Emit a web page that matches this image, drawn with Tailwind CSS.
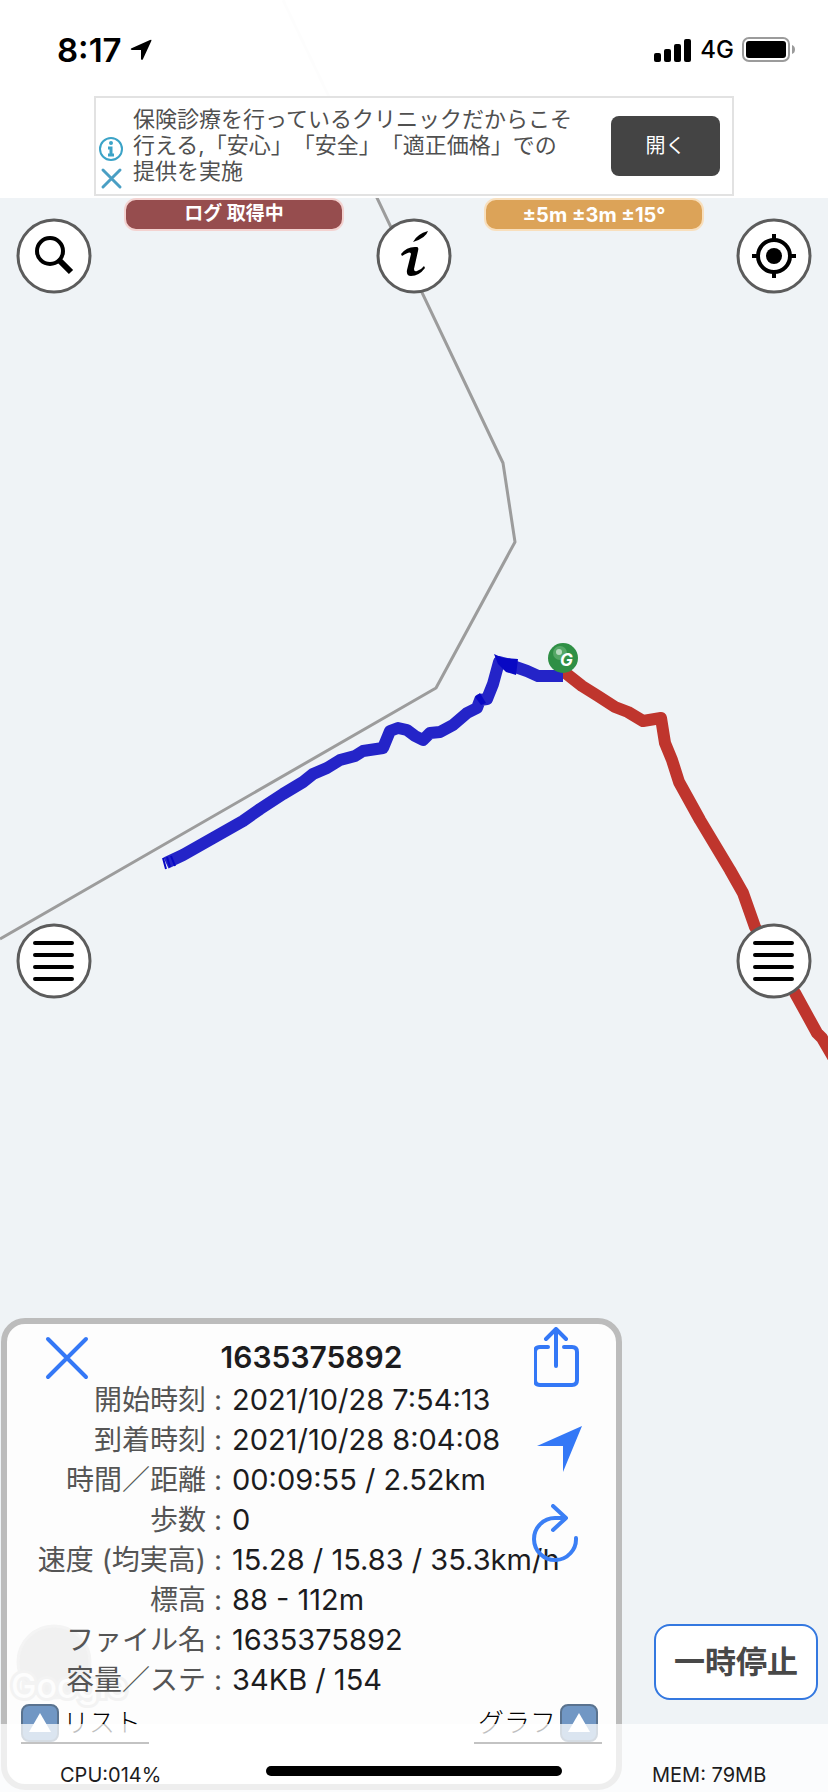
<!DOCTYPE html>
<html lang="ja">
<head>
    <meta charset="UTF-8">
    <meta name="viewport" content="width=device-width, initial-scale=1.0">
    <title>GPS Log Map</title>
    <script src="https://cdn.jsdelivr.net/npm/@tailwindcss/browser@4"></script>
</head>
<body class="bg-[#eff3f6] font-['Inter','Noto_Sans_CJK_JP',sans-serif] text-[#1c1c1e]">
    <div class="relative flex min-h-screen flex-col overflow-hidden">

        <!-- Map canvas -->
        <svg class="absolute inset-0 h-full w-full" viewBox="0 0 828 1792" preserveAspectRatio="xMidYMid slice" fill="none" stroke-linejoin="round">
            <polyline points="283,0 503,463 515,542 436,688 0,939" stroke="#9c9c9c" stroke-width="3"/>
            <polyline points="563,671 582,686 598,696 615,707 628,712 643,721 661,718 665,743 672,760 679,782 700,820 712,840 730,870 743,893 755,927 795,993 817,1033 822,1038 836,1062" stroke="#bf352d" stroke-width="12"/>
            <polyline points="166,863 183,855 213,838 243,821 260,809 283,794 303,782 313,774 327,768 340,760 355,756 363,751 383,748 390,731 398,728 407,730 415,736 423,740 430,733 440,732 453,725 467,713 477,708 480,700 487,699 493,684 499,662 507,664 527,671 538,676 563,676" stroke="#2424c8" stroke-width="12"/>
            <path d="M494 654l9 4 15 1-2 16-10-3-8-8zM475 697l5-4 6 10-5 2z" fill="#0808c4"/>
            <path d="M163 858l3 11M167 857l3 10M171 856l4 10" stroke="#0808c4" stroke-width="2"/>
            <circle cx="563" cy="658" r="15" fill="#2f8f45"/>
            <circle cx="560" cy="653" r="7" fill="#55a766"/>
            <circle cx="559" cy="652" r="3" fill="#b5dabd"/>
            <text x="560" y="666" font-size="17" font-weight="700" font-style="italic" fill="#fff">G</text>
        </svg>

        <header class="relative bg-white/98 pb-0.5">
            <div class="flex h-24 items-center justify-between pt-1 pr-8 pl-[57px]">
                <div class="flex items-center gap-2 text-black">
                    <span class="text-[33px] leading-8 font-semibold">8:17</span>
                    <svg class="h-[22px] w-[22px]" viewBox="0 0 22 22"><path d="M1 9.500L20 1Q22 0 21.300 2L13 20Q12 22 11 20V11H2Q0 10.500 1 9.500z"/></svg>
                </div>
                <div class="flex items-center gap-2 text-black">
                    <svg class="h-6 w-[38px]" viewBox="0 0 38 24"><rect x="0" y="15" width="7" height="9" rx="2"/><rect x="10" y="11" width="7" height="13" rx="2"/><rect x="20" y="6" width="7" height="18" rx="2"/><rect x="30" y="1" width="7" height="23" rx="2"/></svg>
                    <span class="text-2xl leading-6 font-medium">4G</span>
                    <svg class="h-[26px] w-[54px]" viewBox="0 0 54 26"><rect x="1" y="1" width="46" height="23" rx="6" fill="none" stroke="#9b9b9b" stroke-width="2"/><rect x="4" y="4" width="40" height="17" rx="3"/><path d="M50 8q3 1 3 4.500t-3 4.500z" fill="#9b9b9b"/></svg>
                </div>
            </div>

            <!-- Banner ad -->
            <div class="mx-auto flex h-[100px] w-[640px] max-w-full items-center border-2 border-[#e2e2e2] bg-white pr-3">
                <div class="mr-[7px] flex w-[30px] flex-col items-center gap-1 self-end pb-1">
                    <a href="#" aria-label="広告について"><svg class="h-[26px] w-[26px]" viewBox="0 0 26 26" fill="none" stroke="#3ba3c7"><circle cx="13" cy="13" r="11" stroke-width="2"/><path d="M10 12h3v7M10 19h6" stroke-width="3"/><circle cx="13" cy="7" r="1" stroke-width="2"/></svg></a>
                    <button type="button" aria-label="広告を閉じる"><svg class="h-6 w-6" viewBox="0 0 24 24" stroke="#4a9fc4" stroke-width="3" stroke-linecap="round"><path d="M4 4l17 17M21 4L4 21"/></svg></button>
                </div>
                <p class="flex-1 pb-0.5 text-[22px] leading-[26px] whitespace-nowrap text-[#505050] [text-spacing-trim:space-all]">保険診療を行っているクリニックだからこそ<br>行える,「安心」「安全」「適正価格」での<br>提供を実施</p>
                <button type="button" class="h-[60px] w-[109px] rounded-lg bg-[#444] text-xl text-white">開く</button>
            </div>
        </header>

        <main class="relative flex flex-1 flex-col">
            <div class="flex items-start justify-between px-4">
                <button type="button" aria-label="検索" class="mt-5 rounded-full">
                    <svg class="h-[76px] w-[76px]" viewBox="-38 -38 76 76"><circle r="36" fill="#fff" stroke="#5c5c5c" stroke-width="3"/><circle cx="-4" cy="-5" r="13" fill="none" stroke="#000" stroke-width="4"/><path d="M5 4L17 16" stroke="#000" stroke-width="6"/></svg>
                </button>
                <div class="flex h-[33px] w-[220px] items-center justify-center rounded-xl border-2 border-[#f3d2d0] bg-[#964d4e] text-[19px] font-bold text-white">ログ 取得中</div>
                <button type="button" aria-label="情報" class="mt-5 rounded-full">
                    <svg class="h-[76px] w-[76px]" viewBox="-38 -38 76 76"><circle r="36" fill="#fff" stroke="#5c5c5c" stroke-width="3"/><path d="M-1 -14Q3 -22 14 -25Q12 -18 -1 -14zM-13 -2Q-7 -10 3 -9Q5 -9 4 -5L0 13Q0 16 3 15Q7 14 10 10L11 12Q5 20 -3 20Q-8 20 -7 14L-3 -2Q-3 -6 -12 0z"/></svg>
                </button>
                <div class="flex h-[33px] w-[220px] items-center justify-center rounded-xl border-2 border-[#f8dfbd] bg-[#dca358] text-xl font-bold text-white">±5m ±3m ±15°</div>
                <button type="button" aria-label="現在地" class="mt-5 rounded-full">
                    <svg class="h-[76px] w-[76px]" viewBox="-38 -38 76 76"><circle r="36" fill="#fff" stroke="#5c5c5c" stroke-width="3"/><circle r="16" fill="none" stroke="#000" stroke-width="4"/><circle r="8"/><path d="M0 -22v6M0 16v6M-22 0h6M16 0h6" stroke="#000" stroke-width="4"/></svg>
                </button>
            </div>

            <div class="flex-[63]"></div>

            <div class="flex justify-between px-4">
                <button type="button" aria-label="左メニュー" class="rounded-full">
                    <svg class="h-[76px] w-[76px]" viewBox="-38 -38 76 76"><circle r="36" fill="#fff" stroke="#5c5c5c" stroke-width="3"/><path d="M-19 -18H18M-19 -6H18M-19 6H18M-19 18H18" stroke="#000" stroke-width="4" stroke-linecap="round"/></svg>
                </button>
                <button type="button" aria-label="右メニュー" class="rounded-full">
                    <svg class="h-[76px] w-[76px]" viewBox="-38 -38 76 76"><circle r="36" fill="#fff" stroke="#5c5c5c" stroke-width="3"/><path d="M-19 -18H18M-19 -6H18M-19 6H18M-19 18H18" stroke="#000" stroke-width="4" stroke-linecap="round"/></svg>
                </button>
            </div>

            <div class="flex-[32]"></div>

            <div class="flex items-end gap-8 pr-2.5 pb-0.5 pl-px">
                <!-- Log details -->
                <section class="relative flex-1 rounded-3xl border-[6px] border-[#bcbcbc] bg-[#fdfdfd]">
                    <svg class="absolute bottom-[60px] left-0 h-[100px] w-[130px]" viewBox="0 0 130 100"><circle cx="47" cy="38" r="36" fill="#f1f1f1" stroke="#f4f4f4" stroke-width="3"/><text x="4" y="74" font-size="34" font-weight="500" fill="#fdfdfd" stroke="#f3f3f3" stroke-width="6" paint-order="stroke">Google</text></svg>

                    <div class="relative flex h-14 items-center justify-between px-9 pt-2.5">
                        <button type="button" aria-label="閉じる">
                            <svg class="h-[60px] w-[46px]" viewBox="0 0 46 60" stroke="#3478f6" stroke-width="4" stroke-linecap="round"><path d="M5 12L43 50M43 12L5 50"/></svg>
                        </button>
                        <h1 class="text-[30px] leading-10 font-semibold">1635375892</h1>
                        <button type="button" aria-label="共有">
                            <svg class="h-[60px] w-[46px]" viewBox="0 0 46 60" fill="none" stroke="#3478f6" stroke-width="4" stroke-linecap="round" stroke-linejoin="round"><path d="M14 20H6Q1 20 1 25V53Q1 58 6 58H38Q43 58 43 53V25Q43 20 38 20H30M22 39V3M12 12L22 2L32 12"/></svg>
                        </button>
                    </div>

                    <table class="relative">
                        <tbody class="text-[29px] leading-10 whitespace-nowrap [&_th]:h-10 [&_th]:w-[215px] [&_th]:p-0 [&_th]:text-right [&_th]:text-[28px] [&_th]:font-normal [&_th]:text-[#555] [&_td]:p-0 [&_td]:pl-2.5">
                            <tr><th scope="row">開始時刻 :</th><td>2021/10/28 7:54:13</td></tr>
                            <tr><th scope="row">到着時刻 :</th><td>2021/10/28 8:04:08</td></tr>
                            <tr><th scope="row">時間／距離 :</th><td>00:09:55 / 2.52km</td></tr>
                            <tr><th scope="row">歩数 :</th><td>0</td></tr>
                            <tr><th scope="row">速度 (均実高) :</th><td>15.28 / 15.83 / 35.3km/h</td></tr>
                            <tr><th scope="row">標高 :</th><td>88 - 112m</td></tr>
                            <tr><th scope="row">ファイル名 :</th><td>1635375892</td></tr>
                            <tr><th scope="row">容量／ステ :</th><td>34KB / 154</td></tr>
                        </tbody>
                    </table>

                    <div class="absolute top-[100px] right-8 flex flex-col items-end gap-8">
                        <button type="button" aria-label="現在地へ移動">
                            <svg class="h-[48px] w-[48px]" viewBox="0 0 48 48"><path d="M1 22L46 2L27 48V22z" fill="#3478f6"/></svg>
                        </button>
                        <button type="button" aria-label="更新">
                            <svg class="h-[60px] w-[53px]" viewBox="0 0 53 60" fill="none" stroke="#3b7ff5" stroke-width="4" stroke-linecap="round" stroke-linejoin="round"><path d="M22 2L35 14L22 26M34 14H24A21 21 0 1 0 45 34"/></svg>
                        </button>
                    </div>

                    <div class="relative mt-1 mb-10 flex justify-between px-3.5 text-[26px] leading-9 font-light text-black">
                        <a href="#" class="flex w-32 items-center gap-1 border-b-2 border-[#111]">
                            <svg class="h-[38px] w-[38px]" viewBox="0 0 38 38"><rect x="1" y="1" width="36" height="36" rx="7" fill="#7197c4" stroke="#5a738f" stroke-width="2"/><path d="M19 9L30 28H8z" fill="#fff"/></svg>
                            リスト
                        </a>
                        <a href="#" class="flex w-32 items-center justify-end gap-1 border-b-2 border-[#111] pr-1">
                            グラフ
                            <svg class="h-[38px] w-[38px]" viewBox="0 0 38 38"><rect x="1" y="1" width="36" height="36" rx="7" fill="#7197c4" stroke="#5a738f" stroke-width="2"/><path d="M19 9L30 28H8z" fill="#fff"/></svg>
                        </a>
                    </div>
                </section>

                <button type="button" class="mb-[90px] h-[76px] w-[164px] rounded-2xl border-2 border-[#3478e0] bg-white text-[31px] font-bold text-[#484848]">一時停止</button>
            </div>
        </main>

        <!-- Home indicator area -->
        <footer class="absolute inset-x-0 bottom-0 grid h-[68px] grid-cols-[1fr_296px_1fr] items-center bg-white/75 pt-[26px] text-xl leading-6">
            <span class="pt-2 pl-[60px]">CPU:014%</span>
            <span class="h-2.5 rounded-full bg-black"></span>
            <span class="pt-2 pl-[90px]">MEM: 79MB</span>
        </footer>
    </div>
</body>
</html>
